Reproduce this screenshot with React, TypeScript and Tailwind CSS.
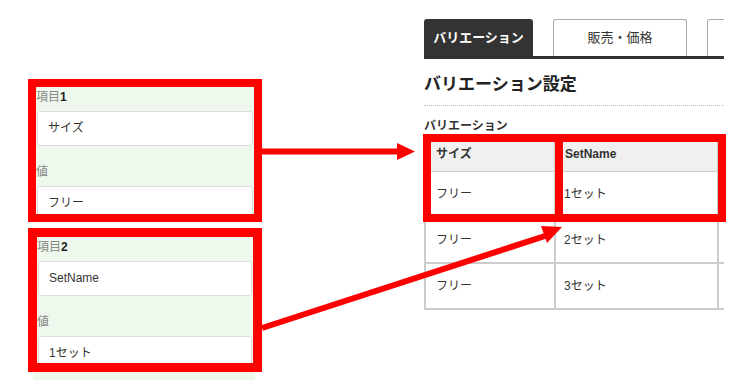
const font = { fontFamily: '"Liberation Sans", "Noto Sans CJK JP", sans-serif' };

function Field({ label, num, value, labelClass }: { label: string; num?: string; value: string; labelClass: string }) {
  return (
    <div>
      <div className={`${labelClass} text-[12px] leading-none text-[#888]`}>
        {label}
        {num && <span className="font-bold text-[#222]">{num}</span>}
      </div>
      <div className="mx-[1px] h-[35px] rounded-[3px] border border-[#ddd] bg-white pl-[10px] text-[12px] leading-[33px] text-[#333]">
        {value}
      </div>
    </div>
  );
}

function Panel({ num, name, value }: { num: string; name: string; value: string }) {
  return (
    <div className="h-full bg-[#eff8ed]">
      <Field label="項目" num={num} value={name} labelClass="pt-[4px] pb-[8px]" />
      <Field label="値" value={value} labelClass="pt-[20px] pb-[8px]" />
    </div>
  );
}

export default function App() {
  const rows = [
    ['フリー', '1セット'],
    ['フリー', '2セット'],
    ['フリー', '3セット'],
  ];

  return (
    <div className="relative flex h-[380px] w-[744px] overflow-hidden bg-white" style={font}>
      {/* left: form panels */}
      <div className="flex w-[396px] shrink-0 flex-col pl-[28px]">
        <div className="mt-[79px] h-[143px] w-[234px] overflow-hidden border-[8px] border-[#ff0000]">
          <Panel num="1" name="サイズ" value="フリー" />
        </div>
        <div className="mt-[6px] h-[144px] w-[234px] overflow-hidden border-[9px] border-[#ff0000]">
          <Panel num="2" name="SetName" value="1セット" />
        </div>
        <div className="ml-[5px] h-[8px] w-[222px] bg-[#eff8ed]" />
      </div>

      {/* right: variation table */}
      <div className="w-[328px] shrink-0 pl-[28px] text-[#333]">
        <div className="mt-[19px] flex h-[37px] w-[300px] items-stretch gap-[20px] overflow-hidden">
          <div className="flex w-[109px] shrink-0 items-center justify-center rounded-t-[3px] bg-[#333] text-[13px] font-bold text-white">
            バリエーション
          </div>
          <div className="flex w-[134px] shrink-0 items-center justify-center rounded-t-[3px] border border-b-0 border-[#aaa] text-[13px] text-[#333]">
            販売・価格
          </div>
          <div className="w-[40px] shrink-0 rounded-t-[3px] border border-b-0 border-[#aaa]" />
        </div>
        <div className="h-[3px] w-[300px] bg-[#333]" />
        <div className="w-[300px] border-b border-dotted border-[#bbb] pt-[15px] pb-[10px] text-[17px] font-bold leading-[21px] text-[#222]">
          バリエーション設定
        </div>
        <div className="pt-[13px] pb-[2px] text-[12px] font-bold leading-[14px] text-[#333]">バリエーション</div>
        <div className="w-[300px] overflow-hidden">
          <div className="grid w-[300px] grid-cols-[130px_163px_7px] border-t-2 border-[#ccc]">
            <div className="flex h-[35px] items-center border-b border-l border-[#ccc] bg-[#f0f0f0] pl-[11px] text-[12px] font-bold">サイズ</div>
            <div className="flex h-[35px] items-center border-b border-l border-[#ccc] bg-[#f0f0f0] pl-[10px] text-[12px] font-bold">SetName</div>
            <div className="h-[35px] border-b border-l border-[#ccc] bg-[#f0f0f0]" />
            {rows.map(([a, b], i) => (
              <div key={i} className="contents">
                <div className="flex h-[46px] items-center border-b-2 border-l-2 border-[#ccc] pl-[10px] text-[12px]">{a}</div>
                <div className="flex h-[46px] items-center border-b-2 border-l-2 border-[#ccc] pl-[8px] text-[12px]">{b}</div>
                <div className="h-[46px] border-b-2 border-l-2 border-[#ccc]" />
              </div>
            ))}
          </div>
        </div>
      </div>

      {/* annotation boxes on the table */}
      <div className="absolute left-[423px] top-[134px] h-[88px] w-[140px] border-[8px] border-[#ff0000]" />
      <div className="absolute left-[555px] top-[134px] h-[88px] w-[171px] border-[8px] border-[#ff0000]" />

      {/* arrows */}
      <svg className="pointer-events-none absolute inset-0" width="744" height="380" viewBox="0 0 744 380">
        <line x1="262" y1="151.5" x2="400" y2="151.5" stroke="#ff0000" strokeWidth="6" />
        <polygon points="397,143 415,151.5 397,160" fill="#ff0000" />
        <line x1="262" y1="328" x2="545" y2="236" stroke="#ff0000" strokeWidth="6" />
        <polygon points="541,226 562,227 547,243" fill="#ff0000" />
      </svg>
    </div>
  );
}
